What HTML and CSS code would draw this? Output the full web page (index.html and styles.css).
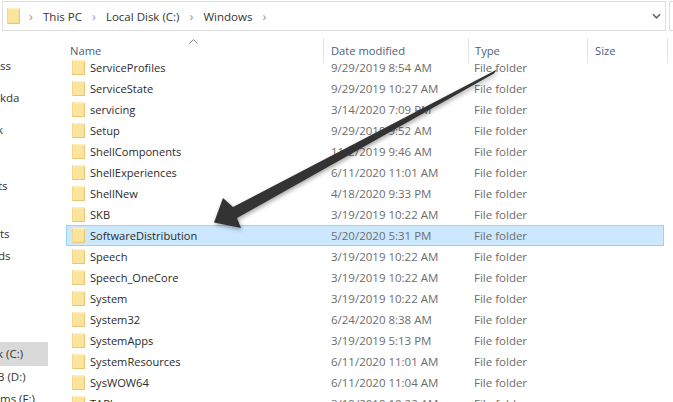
FILE: index.html
```html
<!DOCTYPE html>
<html lang="en">
<head>
<meta charset="utf-8">
<title>Windows</title>
<link rel="stylesheet" href="styles.css">
</head>
<body>
<div class="window">
  <div class="topbar">
    <div class="address">
      <svg class="addr-folder" viewBox="0 0 14 16" preserveAspectRatio="none"><use href="#folder"/></svg>
      <span class="sep">›</span><span class="crumb">This PC</span>
      <span class="sep">›</span><span class="crumb">Local Disk (C:)</span>
      <span class="sep">›</span><span class="crumb">Windows</span>
      <span class="sep">›</span>
      <svg class="drop" viewBox="0 0 10 6"><path d="M1 1l4 4 4-4" fill="none" stroke="#666" stroke-width="1.800"/></svg>
    </div>
    <div class="search"></div>
  </div>
  <div class="main">
    <nav class="side">
      <div class="nav n1">ss</div>
      <div class="nav n2">kda</div>
      <div class="nav n3">k</div>
      <div class="nav n4">ts</div>
      <div class="nav n5">ts</div>
      <div class="nav n6">ds</div>
      <div class="nav n7 current">k (C:)</div>
      <div class="nav n8">B (D:)</div>
      <div class="nav n9">ms (F:)</div>
    </nav>
    <section class="list">
      <div class="head">
        <div class="hc c-name">Name<svg class="sort" viewBox="0 0 9 5"><path d="M.5 4.500l4-4 4 4" fill="none" stroke="#888"/></svg></div>
        <div class="hc c-date">Date modified</div>
        <div class="hc c-type">Type</div>
        <div class="hc c-size">Size</div>
      </div>
      <div class="row"><svg class="fi" viewBox="0 0 14 16" preserveAspectRatio="none"><use href="#folder"/></svg><span class="c-name">ServiceProfiles</span><span class="c-date">9/29/2019 8:54 AM</span><span class="c-type">File folder</span></div>
      <div class="row"><svg class="fi" viewBox="0 0 14 16" preserveAspectRatio="none"><use href="#folder"/></svg><span class="c-name">ServiceState</span><span class="c-date">9/29/2019 10:27 AM</span><span class="c-type">File folder</span></div>
      <div class="row"><svg class="fi" viewBox="0 0 14 16" preserveAspectRatio="none"><use href="#folder"/></svg><span class="c-name">servicing</span><span class="c-date">3/14/2020 7:09 PM</span><span class="c-type">File folder</span></div>
      <div class="row"><svg class="fi" viewBox="0 0 14 16" preserveAspectRatio="none"><use href="#folder"/></svg><span class="c-name">Setup</span><span class="c-date">9/29/2019 9:52 AM</span><span class="c-type">File folder</span></div>
      <div class="row"><svg class="fi" viewBox="0 0 14 16" preserveAspectRatio="none"><use href="#folder"/></svg><span class="c-name">ShellComponents</span><span class="c-date">11/2/2019 9:46 AM</span><span class="c-type">File folder</span></div>
      <div class="row"><svg class="fi" viewBox="0 0 14 16" preserveAspectRatio="none"><use href="#folder"/></svg><span class="c-name">ShellExperiences</span><span class="c-date">6/11/2020 11:01 AM</span><span class="c-type">File folder</span></div>
      <div class="row"><svg class="fi" viewBox="0 0 14 16" preserveAspectRatio="none"><use href="#folder"/></svg><span class="c-name">ShellNew</span><span class="c-date">4/18/2020 9:33 PM</span><span class="c-type">File folder</span></div>
      <div class="row"><svg class="fi" viewBox="0 0 14 16" preserveAspectRatio="none"><use href="#folder"/></svg><span class="c-name">SKB</span><span class="c-date">3/19/2019 10:22 AM</span><span class="c-type">File folder</span></div>
      <div class="row selected"><svg class="fi" viewBox="0 0 14 16" preserveAspectRatio="none"><use href="#folder"/></svg><span class="c-name">SoftwareDistribution</span><span class="c-date">5/20/2020 5:31 PM</span><span class="c-type">File folder</span></div>
      <div class="row"><svg class="fi" viewBox="0 0 14 16" preserveAspectRatio="none"><use href="#folder"/></svg><span class="c-name">Speech</span><span class="c-date">3/19/2019 10:22 AM</span><span class="c-type">File folder</span></div>
      <div class="row"><svg class="fi" viewBox="0 0 14 16" preserveAspectRatio="none"><use href="#folder"/></svg><span class="c-name">Speech_OneCore</span><span class="c-date">3/19/2019 10:22 AM</span><span class="c-type">File folder</span></div>
      <div class="row"><svg class="fi" viewBox="0 0 14 16" preserveAspectRatio="none"><use href="#folder"/></svg><span class="c-name">System</span><span class="c-date">3/19/2019 10:22 AM</span><span class="c-type">File folder</span></div>
      <div class="row"><svg class="fi" viewBox="0 0 14 16" preserveAspectRatio="none"><use href="#folder"/></svg><span class="c-name">System32</span><span class="c-date">6/24/2020 8:38 AM</span><span class="c-type">File folder</span></div>
      <div class="row"><svg class="fi" viewBox="0 0 14 16" preserveAspectRatio="none"><use href="#folder"/></svg><span class="c-name">SystemApps</span><span class="c-date">3/19/2019 5:13 PM</span><span class="c-type">File folder</span></div>
      <div class="row"><svg class="fi" viewBox="0 0 14 16" preserveAspectRatio="none"><use href="#folder"/></svg><span class="c-name">SystemResources</span><span class="c-date">6/11/2020 11:01 AM</span><span class="c-type">File folder</span></div>
      <div class="row"><svg class="fi" viewBox="0 0 14 16" preserveAspectRatio="none"><use href="#folder"/></svg><span class="c-name">SysWOW64</span><span class="c-date">6/11/2020 11:04 AM</span><span class="c-type">File folder</span></div>
      <div class="row"><svg class="fi" viewBox="0 0 14 16" preserveAspectRatio="none"><use href="#folder"/></svg><span class="c-name">TAPI</span><span class="c-date">3/19/2019 10:22 AM</span><span class="c-type">File folder</span></div>
    </section>
  </div>
  <svg class="arrow" viewBox="0 0 673 402">
    <path class="arrow-shape" d="M497 69.500 L494 73.500 L237 218 L241 228 L214 222.500 L223 198 L233 207 Z"/>
  </svg>
</div>
<svg class="defs" width="0" height="0">
  <symbol id="folder" viewBox="0 0 14 16" preserveAspectRatio="none">
    <path d="M0 0h14v16H0z" fill="#fce49c"/>
    <path d="M0 0h14v1.500H0z" fill="#fdeebb"/>
    <path d="M12.800 1.500H14V16H0v-1.200h12.800z" fill="#e6c878"/>
    <path d="M0 0h.8v16H0z" fill="#eed48c"/>
  </symbol>
</svg>
</body>
</html>
```
FILE: styles.css
```css
html, body { margin: 0; padding: 0; background: #fff; }
body { width: 673px; height: 402px; overflow: hidden; font-family: "Open Sans", "Noto Sans", sans-serif; font-size: 11.5px; color: #2b2b2b; }
.window { position: relative; width: 673px; height: 402px; overflow: hidden; }
.defs { position: absolute; }

.topbar { display: flex; height: 30px; margin-top: 1px; padding-left: 2px; gap: 3px; }
.address { box-sizing: border-box; width: 664px; height: 30px; padding-left: 4px; border: 1px solid #dedede; display: flex; align-items: center; font-size: 11.5px; color: #333; flex: none; }
.search { flex: 1; border: 1px solid #dedede; border-right: 0; }
.addr-folder { width: 13px; height: 16px; flex: none; margin-right: -1px; }
.sep { color: #999; font-size: 13px; width: 24px; text-align: center; flex: none; }
.crumb { flex: none; }
.drop { width: 9px; height: 6px; margin-left: auto; margin-right: 4px; }

.main { display: flex; height: 371px; }
.side { width: 48px; flex: none; display: flex; flex-direction: column; overflow: hidden; }
.nav { height: 22px; line-height: 22px; color: #333; white-space: nowrap; }
.n1 { margin-top: 24px; }
.n2 { margin-top: 10px; }
.n3 { margin-top: 10px; text-indent: -3px; }
.n4 { margin-top: 34px; text-indent: -2px; }
.n5 { margin-top: 26px; }
.n6 { text-indent: -2px; }
.n7 { margin-top: 75px; height: 24px; line-height: 24px; background: #d9d9d9; text-indent: -3px; }
.n8 { text-indent: -3px; }

.list { flex: 1; min-width: 0; }
.head { display: flex; height: 19px; margin-top: 7px; line-height: 26px; color: #4c607a; font-size: 11.2px; }
.hc { box-sizing: border-box; height: 25px; border-right: 1px solid #e5e5e5; position: relative; }
.head .c-name { width: 276px; padding-left: 22px; }
.head .c-date { width: 145px; padding-left: 7px; }
.head .c-type { width: 119px; padding-left: 6px; }
.head .c-size { width: 80px; padding-left: 7px; }
.sort { position: absolute; left: 141px; top: 1px; width: 9px; height: 5px; }

.row { box-sizing: border-box; width: 598px; margin-left: 18px; height: 21px; display: flex; align-items: center; border: 1px solid transparent; color: #6d6d6d; white-space: nowrap; position: relative; }
.row .fi { width: 13px; height: 15px; flex: none; margin-left: 5px; }
.row .c-name { width: 241px; margin-left: 5px; color: #2b2b2b; flex: none; font-size: 11.100px; }
.row .c-date { width: 143px; flex: none; }
.row .c-type { flex: none; margin-left: 0; }
.selected { background: #cce8ff; border-color: #99d1ff; }

.arrow { position: absolute; left: 0; top: 0; width: 673px; height: 402px; pointer-events: none; }
.arrow-shape { fill: #333; filter: drop-shadow(1px 2px 2px rgba(0,0,0,.35)); }
```
